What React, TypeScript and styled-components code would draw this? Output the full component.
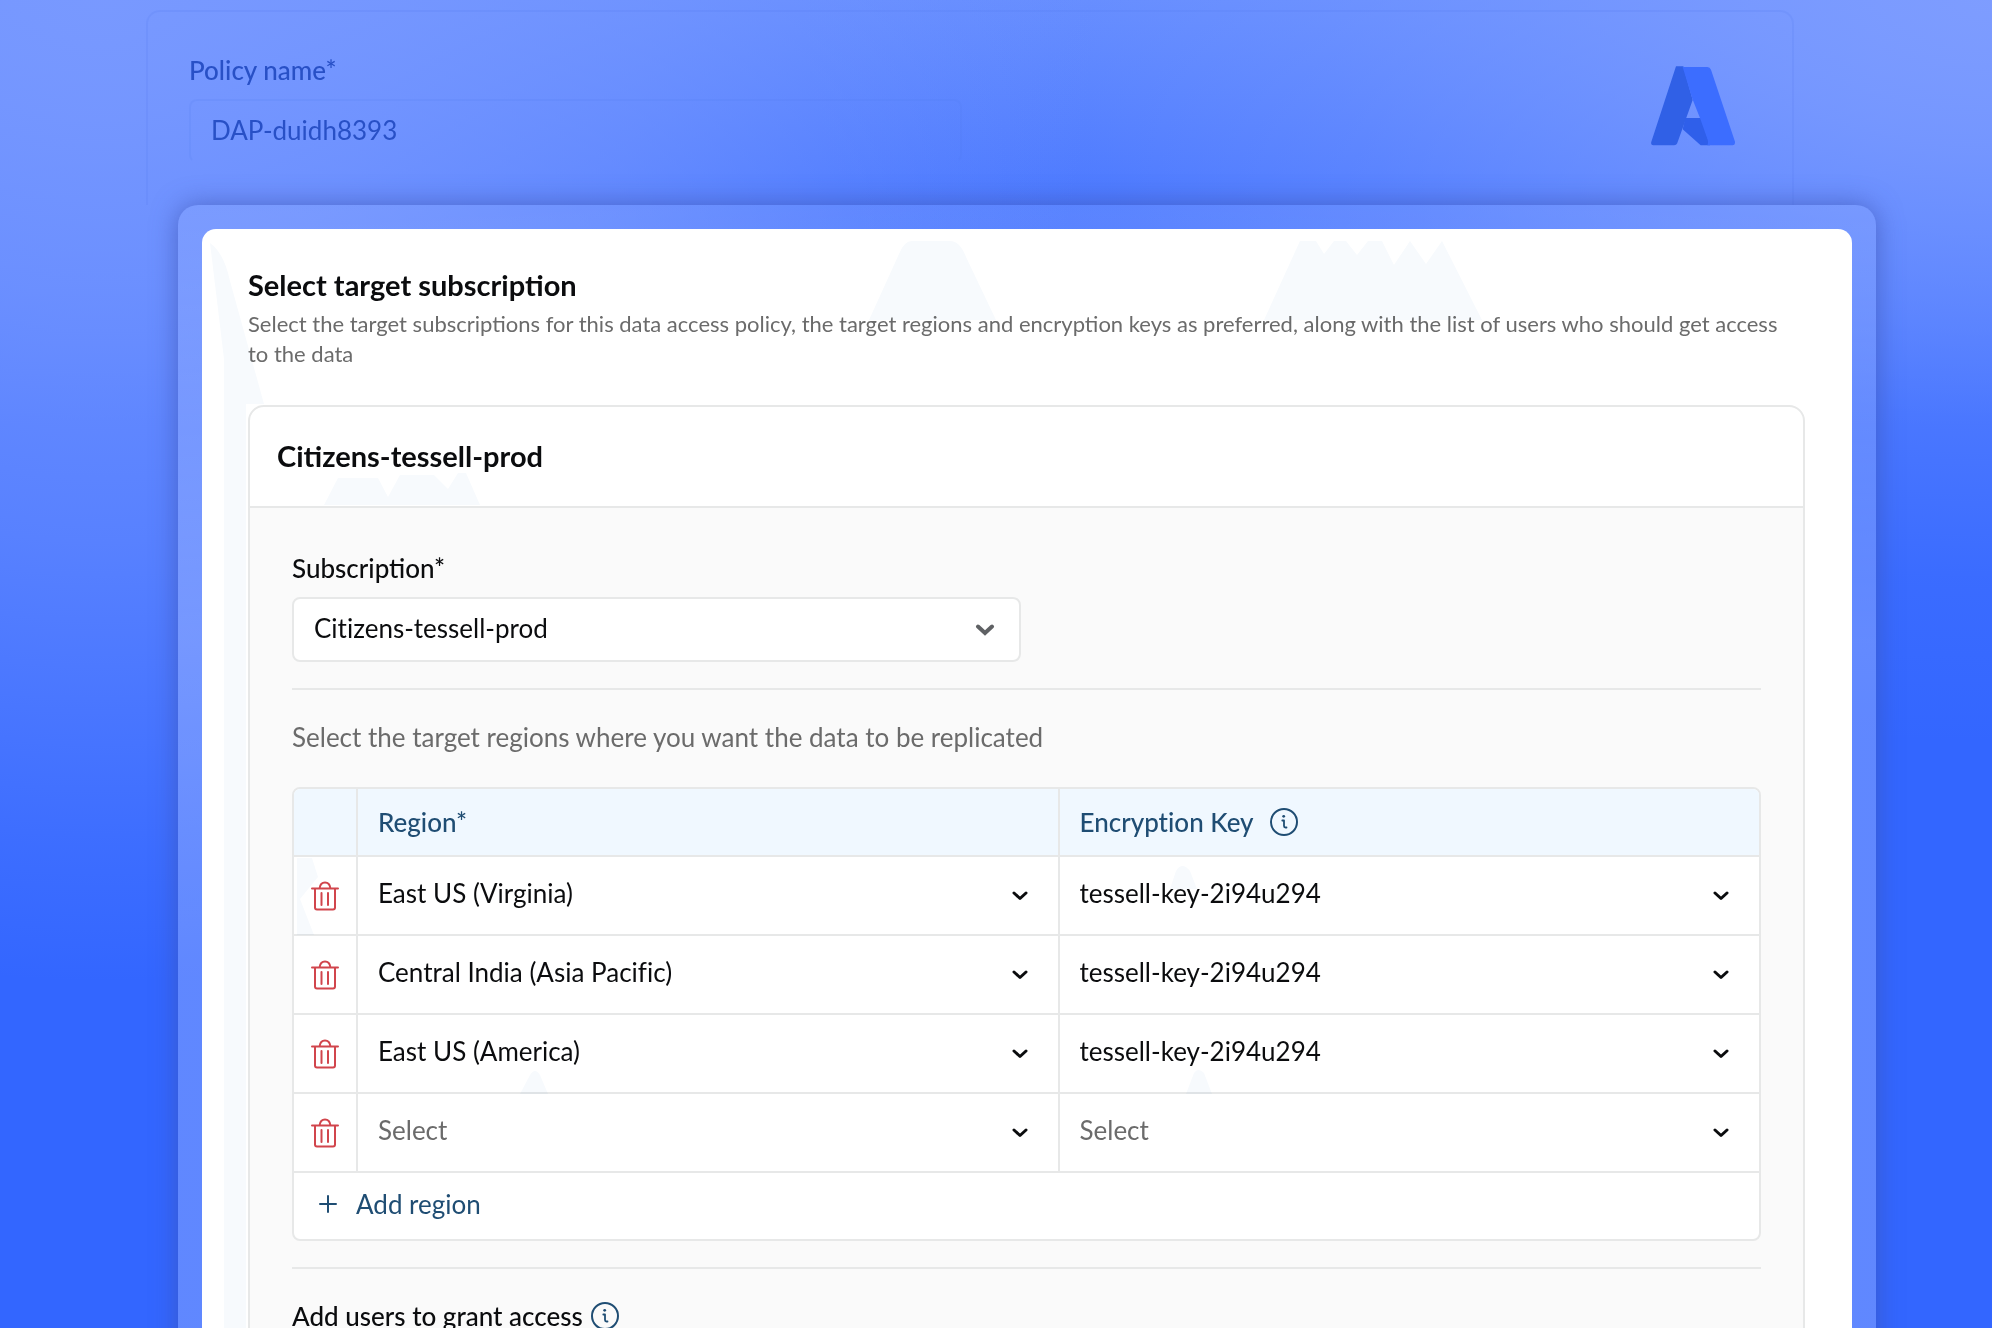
import React, { useState } from "react";
import styled, { createGlobalStyle, css } from "styled-components";

const Global = createGlobalStyle`
  *, *::before, *::after { box-sizing: border-box; }
  body {
    margin: 0;
    font-family: Lato, "Noto Sans", sans-serif;
    font-size: 26px;
    line-height: 30px;
    color: #0b0c0e;
    background: #3366ff;
  }
  button, input, select { font: inherit; color: inherit; }
`;

const line = "#e7e8e8";
const navy = "#1f4d73";

const Page = styled.div`
  height: 100vh;
  overflow: hidden;
  background:
    radial-gradient(
      ellipse 50% 74% at 5% 0%,
      rgba(122, 154, 255, 0.92) 0%,
      rgba(122, 154, 255, 0.74) 30%,
      rgba(122, 154, 255, 0.52) 55%,
      rgba(122, 154, 255, 0.3) 73%,
      rgba(122, 154, 255, 0.14) 86%,
      rgba(122, 154, 255, 0) 100%
    ),
    radial-gradient(
      ellipse 60% 56% at 100% 0%,
      rgba(128, 158, 255, 0.92) 0%,
      rgba(126, 157, 255, 0.78) 20%,
      rgba(124, 156, 255, 0.53) 41%,
      rgba(124, 156, 255, 0.32) 56%,
      rgba(124, 156, 255, 0.1) 78%,
      rgba(124, 156, 255, 0) 100%
    ),
    linear-gradient(#648cff, #4a78ff 14%, #3366ff 32%);
`;

const PolicyCard = styled.section`
  display: flex;
  justify-content: space-between;
  align-items: flex-start;
  height: 195px;
  margin: 10px 198px 0 146px;
  padding: 43px 57px 0 41px;
  border: 2px solid rgba(80, 120, 235, 0.16);
  border-bottom: 0;
  border-radius: 14px 14px 0 0;
  color: #2850c6;
`;

const PolicyField = styled.div`
  display: flex;
  flex-direction: column;
  gap: 14px;
  width: 50%;
`;

const Label = styled.label`
  font-weight: 500;
`;

const PolicyInput = styled.input`
  height: 64px;
  padding: 0 20px 3px;
  border: 2px solid rgba(80, 120, 235, 0.14);
  border-bottom-color: transparent;
  border-radius: 8px;
  background: transparent;
  outline: none;
`;

const AzureLogo = styled.svg`
  width: 84px;
  height: 80px;
  margin-top: 11px;
`;

const Frame = styled.div`
  margin: 0 116px 0 178px;
  padding: 24px 24px 0;
  border-radius: 20px 20px 0 0;
  background: linear-gradient(rgba(255, 255, 255, 0.08), rgba(255, 255, 255, 0.22) 35%);
  box-shadow: 0 0 26px rgba(60, 80, 170, 0.65);
`;

const Dialog = styled.main`
  position: relative;
  padding: 39px 47px 60px 46px;
  border-radius: 14px 14px 0 0;
  background: #ffffff;
`;

const Haze = styled.svg`
  position: absolute;
  top: 0;
  left: 0;
  pointer-events: none;
  mix-blend-mode: multiply;
`;

const Heading = css`
  margin: 0;
  font-size: 29px;
  line-height: 34px;
  font-weight: 700;
`;

const Title = styled.h1`
  ${Heading}
`;

const Description = styled.p`
  margin: 7px 0 36px;
  padding-right: 20px;
  font-size: 22px;
  color: #6b6b6b;
`;

const Card = styled.section`
  border: 2px solid ${line};
  border-radius: 16px;
  overflow: hidden;
`;

const CardHead = styled.header`
  padding: 32px 27px 33px;
  border-bottom: 2px solid ${line};
`;

const CardTitle = styled.h2`
  ${Heading}
`;

const CardBody = styled.div`
  padding: 45px 42px 60px;
  background: #fafafa;
`;

const Field = styled.div`
  display: flex;
  flex-direction: column;
  gap: 14px;
  width: calc(50% - 6px);
`;

const Divider = styled.hr`
  height: 2px;
  margin: 26px 0 32px;
  border: 0;
  background: ${line};
`;

const Picker = styled.div`
  display: grid;
  align-items: center;
  & > * { grid-area: 1 / 1; }
  svg { justify-self: end; pointer-events: none; }
`;

const Select = styled.select<{ $boxed?: boolean; $empty?: boolean }>`
  appearance: none;
  width: 100%;
  margin: 0;
  border: 0;
  outline: none;
  background: transparent;
  font-variant-ligatures: none;
  color: ${(p) => (p.$empty ? "#6b6b6b" : "inherit")};
  ${(p) =>
    p.$boxed
      ? css`
          height: 65px;
          padding: 0 60px 4px 20px;
          border: 2px solid ${line};
          border-radius: 8px;
          background: #ffffff;
        `
      : css`
          height: 77px;
          padding: 0 60px 5px 20px;
        `}
`;

const Chevron = styled.svg<{ $large?: boolean }>`
  width: ${(p) => (p.$large ? 20 : 16)}px;
  height: ${(p) => (p.$large ? 12 : 10)}px;
  margin-right: ${(p) => (p.$large ? 26 : 30)}px;
  fill: none;
  stroke: ${(p) => (p.$large ? "#5f6164" : "#0b0c0e")};
  stroke-width: ${(p) => (p.$large ? 4 : 3)};
  stroke-linecap: round;
  stroke-linejoin: ${(p) => (p.$large ? "miter" : "round")};
`;

const Hint = styled.p`
  margin: 0 0 35px;
  color: #6b6b6b;
`;

const TableBox = styled.div`
  border: 2px solid ${line};
  border-radius: 8px;
  overflow: hidden;
  background: #ffffff;
`;

const Table = styled.table`
  width: 100%;
  border-collapse: separate;
  border-spacing: 0;
  table-layout: fixed;
`;

const HeadCell = styled.th<{ $narrow?: boolean }>`
  width: ${(p) => (p.$narrow ? "62px" : "auto")};
  height: 68px;
  padding: 0 20px;
  border-bottom: 2px solid ${line};
  background: #f0f8ff;
  color: ${navy};
  font-weight: 500;
  font-variant-ligatures: none;
  text-align: left;
  & + & { border-left: 2px solid ${line}; }
`;

const Cell = styled.td`
  height: 79px;
  padding: 0;
  border-bottom: 2px solid ${line};
  & + & { border-left: 2px solid ${line}; }
`;

const WithInfo = styled.div<{ $gap: number }>`
  display: flex;
  align-items: center;
  gap: ${(p) => p.$gap}px;
`;

const IconButton = styled.button`
  display: flex;
  margin: 0 auto;
  padding: 0;
  border: 0;
  background: transparent;
  cursor: pointer;
`;

const InfoButton = styled(IconButton)`
  margin: 0;
  color: ${navy};
`;

const AddButton = styled.button`
  display: flex;
  align-items: center;
  gap: 19px;
  width: 100%;
  height: 66px;
  padding: 0 25px 4px;
  border: 0;
  background: transparent;
  color: ${navy};
  cursor: pointer;
`;

const UsersTitle = styled.h3`
  margin: 0;
  font-size: 26px;
  font-weight: 500;
`;

const ChevronIcon = ({ large }: { large?: boolean }) => (
  <Chevron $large={large} viewBox={large ? "0 0 20 12" : "0 0 16 10"} aria-hidden="true">
    <path d={large ? "M3 2.500l7 6.500 7-6.500" : "M2 2l6 5.500L14 2"} />
  </Chevron>
);

const TrashIcon = () => (
  <svg width="28" height="30" viewBox="0 0 28 30" fill="none" stroke="#d1454c" strokeWidth="2" strokeLinecap="round" aria-hidden="true">
    <path d="M1 7.500h26M8.500 7.500C9 3.500 11 1.500 14 1.500s5 2 5.500 6M4 8v18.500c0 1.300.7 2 2 2h16c1.300 0 2-.7 2-2V8M10.500 12v12M17 12v12" />
  </svg>
);

const PlusIcon = () => (
  <svg width="18" height="18" viewBox="0 0 18 18" fill="none" stroke="currentColor" strokeWidth="2" strokeLinecap="round" aria-hidden="true">
    <path d="M9 1v16M1 9h16" />
  </svg>
);

const Info = ({ label }: { label: string }) => (
  <InfoButton type="button" aria-label={label}>
    <svg width="28" height="28" viewBox="0 0 28 28" fill="none" stroke="currentColor" strokeWidth="2" strokeLinecap="round" strokeLinejoin="round" aria-hidden="true">
      <circle cx="14" cy="14" r="13" />
      <path d="M12.300 12.500h1.700v5.500c0 1 .5 1.500 1.500 1.500h1" strokeWidth="1.8" />
      <circle cx="13.700" cy="8.300" r="1.400" fill="currentColor" stroke="none" />
    </svg>
  </InfoButton>
);

const keys = ["tessell-key-2i94u294"];
const regions = ["East US (Virginia)", "Central India (Asia Pacific)", "East US (America)"];

function CellSelect({ label, initial, options }: { label: string; initial: string; options: string[] }) {
  const [value, setValue] = useState(initial);
  return (
    <Picker>
      <Select aria-label={label} value={value} $empty={!value} onChange={(e) => setValue(e.target.value)}>
        <option value="">Select</option>
        {options.map((o) => (
          <option key={o}>{o}</option>
        ))}
      </Select>
      <ChevronIcon />
    </Picker>
  );
}

type Row = { id: number; region: string; key: string };

export default function App() {
  const [rows, setRows] = useState<Row[]>([
    { id: 1, region: regions[0], key: keys[0] },
    { id: 2, region: regions[1], key: keys[0] },
    { id: 3, region: regions[2], key: keys[0] },
    { id: 4, region: "", key: "" },
  ]);

  return (
    <Page>
      <Global />
      <PolicyCard>
        <PolicyField>
          <Label htmlFor="policy">Policy name*</Label>
          <PolicyInput id="policy" defaultValue="DAP-duidh8393" />
        </PolicyField>
        <AzureLogo viewBox="93 77 252 238" role="img" aria-label="Azure">
          <path fill="#3060e6" d="M168 77H190L218 178L173 304Q170 314 162 314H100Q91 314 94 303Z" />
          <path fill="#2f5fea" d="M196 232H244L270 314H242L188 266Z" />
          <path fill="#3c6dff" d="M188 79H262Q270 79 273 87L345 303Q346 314 338 314H262Q266 305 262 294L240 232L217 174Z" />
        </AzureLogo>
      </PolicyCard>

      <Frame>
        <Dialog>
          <Title>Select target subscription</Title>
          <Description>
            Select the target subscriptions for this data access policy, the target regions and encryption keys as
            preferred, along with the list of users who should get access to the data
          </Description>

          <Card>
            <CardHead>
              <CardTitle>Citizens-tessell-prod</CardTitle>
            </CardHead>
            <CardBody>
              <Field>
                <Label htmlFor="subscription">Subscription*</Label>
                <Picker>
                  <Select id="subscription" $boxed defaultValue="Citizens-tessell-prod">
                    <option>Citizens-tessell-prod</option>
                  </Select>
                  <ChevronIcon large />
                </Picker>
              </Field>
              <Divider />
              <Hint>Select the target regions where you want the data to be replicated</Hint>
              <TableBox>
                <Table>
                  <thead>
                    <tr>
                      <HeadCell $narrow aria-label="Remove" />
                      <HeadCell>Region*</HeadCell>
                      <HeadCell>
                        <WithInfo $gap={16}>
                          Encryption Key
                          <Info label="About encryption keys" />
                        </WithInfo>
                      </HeadCell>
                    </tr>
                  </thead>
                  <tbody>
                    {rows.map((row) => (
                      <tr key={row.id}>
                        <Cell>
                          <IconButton
                            type="button"
                            aria-label="Remove region"
                            onClick={() => setRows(rows.filter((r) => r.id !== row.id))}
                          >
                            <TrashIcon />
                          </IconButton>
                        </Cell>
                        <Cell>
                          <CellSelect label="Region" initial={row.region} options={regions} />
                        </Cell>
                        <Cell>
                          <CellSelect label="Encryption key" initial={row.key} options={keys} />
                        </Cell>
                      </tr>
                    ))}
                  </tbody>
                </Table>
                <AddButton type="button" onClick={() => setRows([...rows, { id: Date.now(), region: "", key: "" }])}>
                  <PlusIcon />
                  Add region
                </AddButton>
              </TableBox>
              <Divider />
              <WithInfo $gap={8}>
                <UsersTitle>Add users to grant access</UsersTitle>
                <Info label="About user access" />
              </WithInfo>
            </CardBody>
          </Card>

          <Haze width="1300" height="1100" viewBox="0 0 1300 1100" fill="#f7fafd" aria-hidden="true">
            <path d="M8 14Q22 24 28 52L62 175H44V1100H22V130L16 80Z" />
            <path d="M667 91L697 25Q702 12 710 12H748Q758 12 764 28L794 91Z" />
            <path d="M1062 91L1098 12H1114L1122 25L1132 12H1144L1155 26L1166 12H1180L1192 36L1208 12L1224 35L1240 12L1280 91Z" />
            <path d="M122 276L136 249H176L186 268L198 246H232L246 260L256 244H264L278 276Z" />
            <path d="M95 629H110L116 648L98 670L112 706H95Z" />
            <path d="M318 865L328 846Q333 838 338 846L346 865Z" />
            <path d="M968 660L974 642Q980 632 988 642L995 660Z" />
            <path d="M984 865L992 844Q996 838 1002 844L1010 865Z" />
          </Haze>
        </Dialog>
      </Frame>
    </Page>
  );
}
